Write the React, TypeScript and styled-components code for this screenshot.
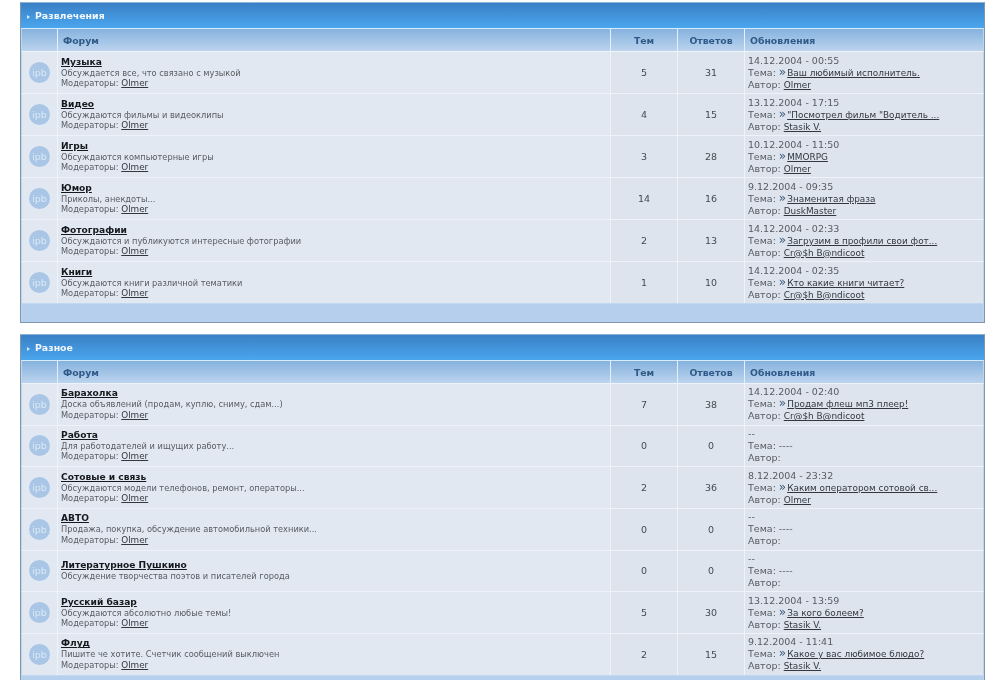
import React from "react";
import styled, { createGlobalStyle } from "styled-components";

type Forum = {
  name: string;
  description: string;
  moderated?: boolean;
  topics: number;
  replies: number;
  date: string;
  topic?: string;
  author?: string;
};

const GlobalStyle = createGlobalStyle`
  html, body {
    margin: 0;
    padding: 0;
    background: #fff;
    overflow: hidden;
    height: 680px;
  }
  body {
    font-family: "DejaVu Sans", Verdana, sans-serif;
    font-size: 9.5px;
    color: #4a4f55;
  }
`;

const Page = styled.div`
  padding: 2px 15px 0 20px;
  display: flex;
  flex-direction: column;
  gap: 11px;
  filter: blur(0.3px);
`;

const Section = styled.section`
  border: 1px solid #7f98ae;
  border-top-color: #8db4d6;
`;

const TitleBar = styled.div`
  height: 25px;
  display: flex;
  align-items: center;
  gap: 5px;
  padding-left: 6px;
  background: linear-gradient(#3a80c6, #4aa6ee);
  color: #f2f8fe;
  font-size: 9.4px;
  font-weight: bold;
`;

const TitleArrow = styled.span`
  width: 0;
  height: 0;
  margin-top: 2px;
  border-left: 3px solid #d5e9fa;
  border-top: 2px solid transparent;
  border-bottom: 2px solid transparent;
`;

const Grid = styled.div<{ $height: number }>`
  display: grid;
  grid-template-columns: 35px 553px 67px 67px 1fr;
  height: ${(p) => p.$height}px;
  box-sizing: border-box;
  border-left: 1px solid #bcd4ec;
  border-right: 1px solid #bcd4ec;
`;

const HeaderGrid = styled(Grid)`
  background: linear-gradient(#86b2de, #bcd4ee);
  border-top: 1px solid #d6ecfb;
`;

const HeaderCell = styled.div<{ $center?: boolean }>`
  display: flex;
  align-items: center;
  justify-content: ${(p) => (p.$center ? "center" : "flex-start")};
  padding-left: ${(p) => (p.$center ? 0 : 5)}px;
  border-left: 1px solid #e4f0fa;
  color: #2f5a88;
  font-size: 9.3px;
  font-weight: bold;
  &:first-child {
    border-left: 0;
  }
`;

const RowGrid = styled(Grid)`
  border-top: 1px solid #eef3f9;
  background: #dde4ee;
`;

const IconCell = styled.div`
  display: flex;
  align-items: center;
  justify-content: center;
  background: #e1e8f2;
`;

const IpbIcon = styled.div`
  width: 21px;
  height: 21px;
  border-radius: 50%;
  display: flex;
  align-items: center;
  justify-content: center;
  background: #a9c6e6;
  color: #dbe8f5;
  font-size: 9.5px;
`;

const ForumCell = styled.div`
  display: flex;
  flex-direction: column;
  justify-content: center;
  padding-left: 3px;
  background: #e1e8f2;
  border-left: 1px solid #eef3f9;
  line-height: 10.5px;
  font-size: 8.25px;
`;

const ForumName = styled.a`
  color: #15181c;
  font-size: 9.1px;
  font-weight: bold;
  text-decoration: underline;
  line-height: 11px;
`;

const Muted = styled.div`
  color: #585c61;
  white-space: nowrap;
`;

const Link = styled.a<{ $size: number }>`
  color: #33383e;
  font-size: ${(p) => p.$size}px;
  text-decoration: underline;
`;

const CountCell = styled.div`
  display: flex;
  align-items: center;
  justify-content: center;
  border-left: 1px solid #eef3f9;
  color: #444a50;
  font-size: 9.5px;
`;

const LastCell = styled.div`
  display: flex;
  flex-direction: column;
  justify-content: center;
  padding-left: 3px;
  border-left: 1px solid #eef3f9;
  line-height: 12px;
  white-space: nowrap;
`;

const Quote = styled.span`
  margin: 0 1px 0 0;
  color: #3e5a78;
  font-size: 12px;
  line-height: 10px;
`;

const Footer = styled.div`
  height: 18px;
  background: #b5cfed;
  border-top: 1px solid #c2d8f0;
  border-left: 1px solid #bcd4ec;
  border-right: 1px solid #bcd4ec;
`;

const fun: Forum[] = [
  { name: "Музыка", description: "Обсуждается все, что связано с музыкой", moderated: true, topics: 5, replies: 31, date: "14.12.2004 - 00:55", topic: "Ваш любимый исполнитель.", author: "Olmer" },
  { name: "Видео", description: "Обсуждаются фильмы и видеоклипы", moderated: true, topics: 4, replies: 15, date: "13.12.2004 - 17:15", topic: "\"Посмотрел фильм \"Водитель ...", author: "Stasik V." },
  { name: "Игры", description: "Обсуждаются компьютерные игры", moderated: true, topics: 3, replies: 28, date: "10.12.2004 - 11:50", topic: "MMORPG", author: "Olmer" },
  { name: "Юмор", description: "Приколы, анекдоты...", moderated: true, topics: 14, replies: 16, date: "9.12.2004 - 09:35", topic: "Знаменитая фраза", author: "DuskMaster" },
  { name: "Фотографии", description: "Обсуждаются и публикуются интересные фотографии", moderated: true, topics: 2, replies: 13, date: "14.12.2004 - 02:33", topic: "Загрузим в профили свои фот...", author: "Cr@$h B@ndicoot" },
  { name: "Книги", description: "Обсуждаются книги различной тематики", moderated: true, topics: 1, replies: 10, date: "14.12.2004 - 02:35", topic: "Кто какие книги читает?", author: "Cr@$h B@ndicoot" },
];

const misc: Forum[] = [
  { name: "Барахолка", description: "Доска объявлений (продам, куплю, сниму, сдам...)", moderated: true, topics: 7, replies: 38, date: "14.12.2004 - 02:40", topic: "Продам флеш мп3 плеер!", author: "Cr@$h B@ndicoot" },
  { name: "Работа", description: "Для работодателей и ищущих работу...", moderated: true, topics: 0, replies: 0, date: "--" },
  { name: "Сотовые и связь", description: "Обсуждаются модели телефонов, ремонт, операторы...", moderated: true, topics: 2, replies: 36, date: "8.12.2004 - 23:32", topic: "Каким оператором сотовой св...", author: "Olmer" },
  { name: "АВТО", description: "Продажа, покупка, обсуждение автомобильной техники...", moderated: true, topics: 0, replies: 0, date: "--" },
  { name: "Литературное Пушкино", description: "Обсуждение творчества поэтов и писателей города", topics: 0, replies: 0, date: "--" },
  { name: "Русский базар", description: "Обсуждаются абсолютно любые темы!", moderated: true, topics: 5, replies: 30, date: "13.12.2004 - 13:59", topic: "За кого болеем?", author: "Stasik V." },
  { name: "Флуд", description: "Пишите че хотите. Счетчик сообщений выключен", moderated: true, topics: 2, replies: 15, date: "9.12.2004 - 11:41", topic: "Какое у вас любимое блюдо?", author: "Stasik V." },
];

function ForumSection({ title, forums, rowHeight }: { title: string; forums: Forum[]; rowHeight: number }) {
  return (
    <Section>
      <TitleBar>
        <TitleArrow />
        {title}
      </TitleBar>
      <HeaderGrid $height={23}>
        <HeaderCell />
        <HeaderCell>Форум</HeaderCell>
        <HeaderCell $center>Тем</HeaderCell>
        <HeaderCell $center>Ответов</HeaderCell>
        <HeaderCell>Обновления</HeaderCell>
      </HeaderGrid>
      {forums.map((forum) => (
        <RowGrid key={forum.name} $height={rowHeight}>
          <IconCell>
            <IpbIcon>ipb</IpbIcon>
          </IconCell>
          <ForumCell>
            <div>
              <ForumName>{forum.name}</ForumName>
            </div>
            <Muted>{forum.description}</Muted>
            {forum.moderated && (
              <Muted>
                Модераторы: <Link $size={8.8}>Olmer</Link>
              </Muted>
            )}
          </ForumCell>
          <CountCell>{forum.topics}</CountCell>
          <CountCell>{forum.replies}</CountCell>
          <LastCell>
            <Muted>{forum.date}</Muted>
            <Muted>
              Тема: {forum.topic ? (
                <>
                  <Quote>»</Quote>
                  <Link $size={8.9}>{forum.topic}</Link>
                </>
              ) : (
                "----"
              )}
            </Muted>
            <Muted>Автор: {forum.author && <Link $size={8.9}>{forum.author}</Link>}</Muted>
          </LastCell>
        </RowGrid>
      ))}
      <Footer />
    </Section>
  );
}

export default function App() {
  return (
    <>
      <GlobalStyle />
      <Page>
        <ForumSection title="Развлечения" forums={fun} rowHeight={42} />
        <ForumSection title="Разное" forums={misc} rowHeight={41.67} />
      </Page>
    </>
  );
}
